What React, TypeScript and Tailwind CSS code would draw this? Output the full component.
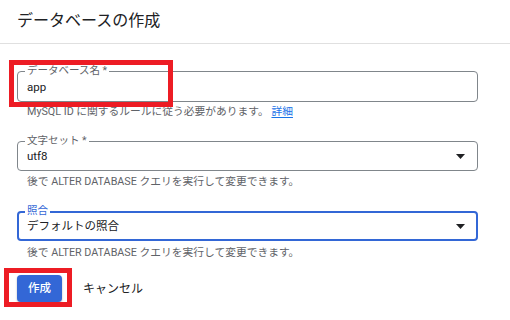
import React from "react";

const FONT = { fontFamily: '"Roboto", "Noto Sans CJK JP", sans-serif' };

function Arrow() {
  return (
    <svg width="9" height="5" viewBox="0 0 9 5" className="shrink-0">
      <path d="M0 0 L9 0 L4.5 5 Z" fill="#202124" />
    </svg>
  );
}

interface FieldProps {
  label: string;
  value: string;
  select?: boolean;
  focused?: boolean;
  height: string;
}

function Field({ label, value, select, focused, height }: FieldProps) {
  return (
    <div
      className={[
        "relative w-[461px] rounded-[4px] flex items-center justify-between",
        height,
        focused ? "border-2 border-[#3367d6] pl-[8px] pr-[11px]" : "border border-[#80868b] pl-[9px] pr-[12px]",
      ].join(" ")}
    >
      <span
        className={[
          "absolute px-[2px] bg-white text-[10.5px] leading-[14px]",
          focused ? "text-[#3367d6] left-[6px] -top-[9px]" : "text-[#5f6368] left-[7px] -top-[8px]",
        ].join(" ")}
      >
        {label}
      </span>
      <span className="text-[11.5px] text-[#202124] leading-[16px]">{value}</span>
      {select && <Arrow />}
    </div>
  );
}

function Helper({ children, mt }: { children: React.ReactNode; mt: string }) {
  return (
    <p className={["pl-[10px] text-[10.75px] leading-[14px] text-[#5f6368]", mt].join(" ")}>
      {children}
    </p>
  );
}

export default function App() {
  return (
    <div className="relative w-[510px] h-[320px] bg-white overflow-hidden" style={FONT}>
      <div className="h-[44px] border-b border-[#e0e0e0] flex items-center pl-[17px]">
        <h1 className="text-[16px] text-[#202124] leading-[20px] pb-[2px]">データベースの作成</h1>
      </div>

      <div className="pl-[17px]">
        <div className="mt-[27px]">
          <Field label="データベース名 *" value="app" height="h-[31px]" />
        </div>
        <Helper mt="mt-[3px]">
          MySQL ID に関するルールに従う必要があります。{" "}
          <span className="text-[#1a73e8] underline underline-offset-2">詳細</span>
        </Helper>

        <div className="mt-[22px]">
          <Field label="文字セット *" value="utf8" select height="h-[30px]" />
        </div>
        <Helper mt="mt-[4px]">後で ALTER DATABASE クエリを実行して変更できます。</Helper>

        <div className="mt-[22px]">
          <Field label="照合" value="デフォルトの照合" select focused height="h-[30px]" />
        </div>
        <Helper mt="mt-[5px]">後で ALTER DATABASE クエリを実行して変更できます。</Helper>

        <div className="mt-[15px] flex items-center gap-[21px]">
          <button
            type="button"
            className="w-[45px] h-[27px] rounded-[4px] bg-[#3367d6] text-white text-[11.5px] font-medium shadow-[0_1px_2px_rgba(0,0,0,0.3)]"
          >
            作成
          </button>
          <span className="text-[12px] text-[#202124]">キャンセル</span>
        </div>
      </div>

      {/* red annotation boxes */}
      <div className="absolute left-[9px] top-[60px] w-[164px] h-[47px] border-[5px] border-[#ed1c24]" />
      <div className="absolute left-[4px] top-[268px] w-[68px] h-[39px] border-[5px] border-[#ed1c24]" />
    </div>
  );
}
